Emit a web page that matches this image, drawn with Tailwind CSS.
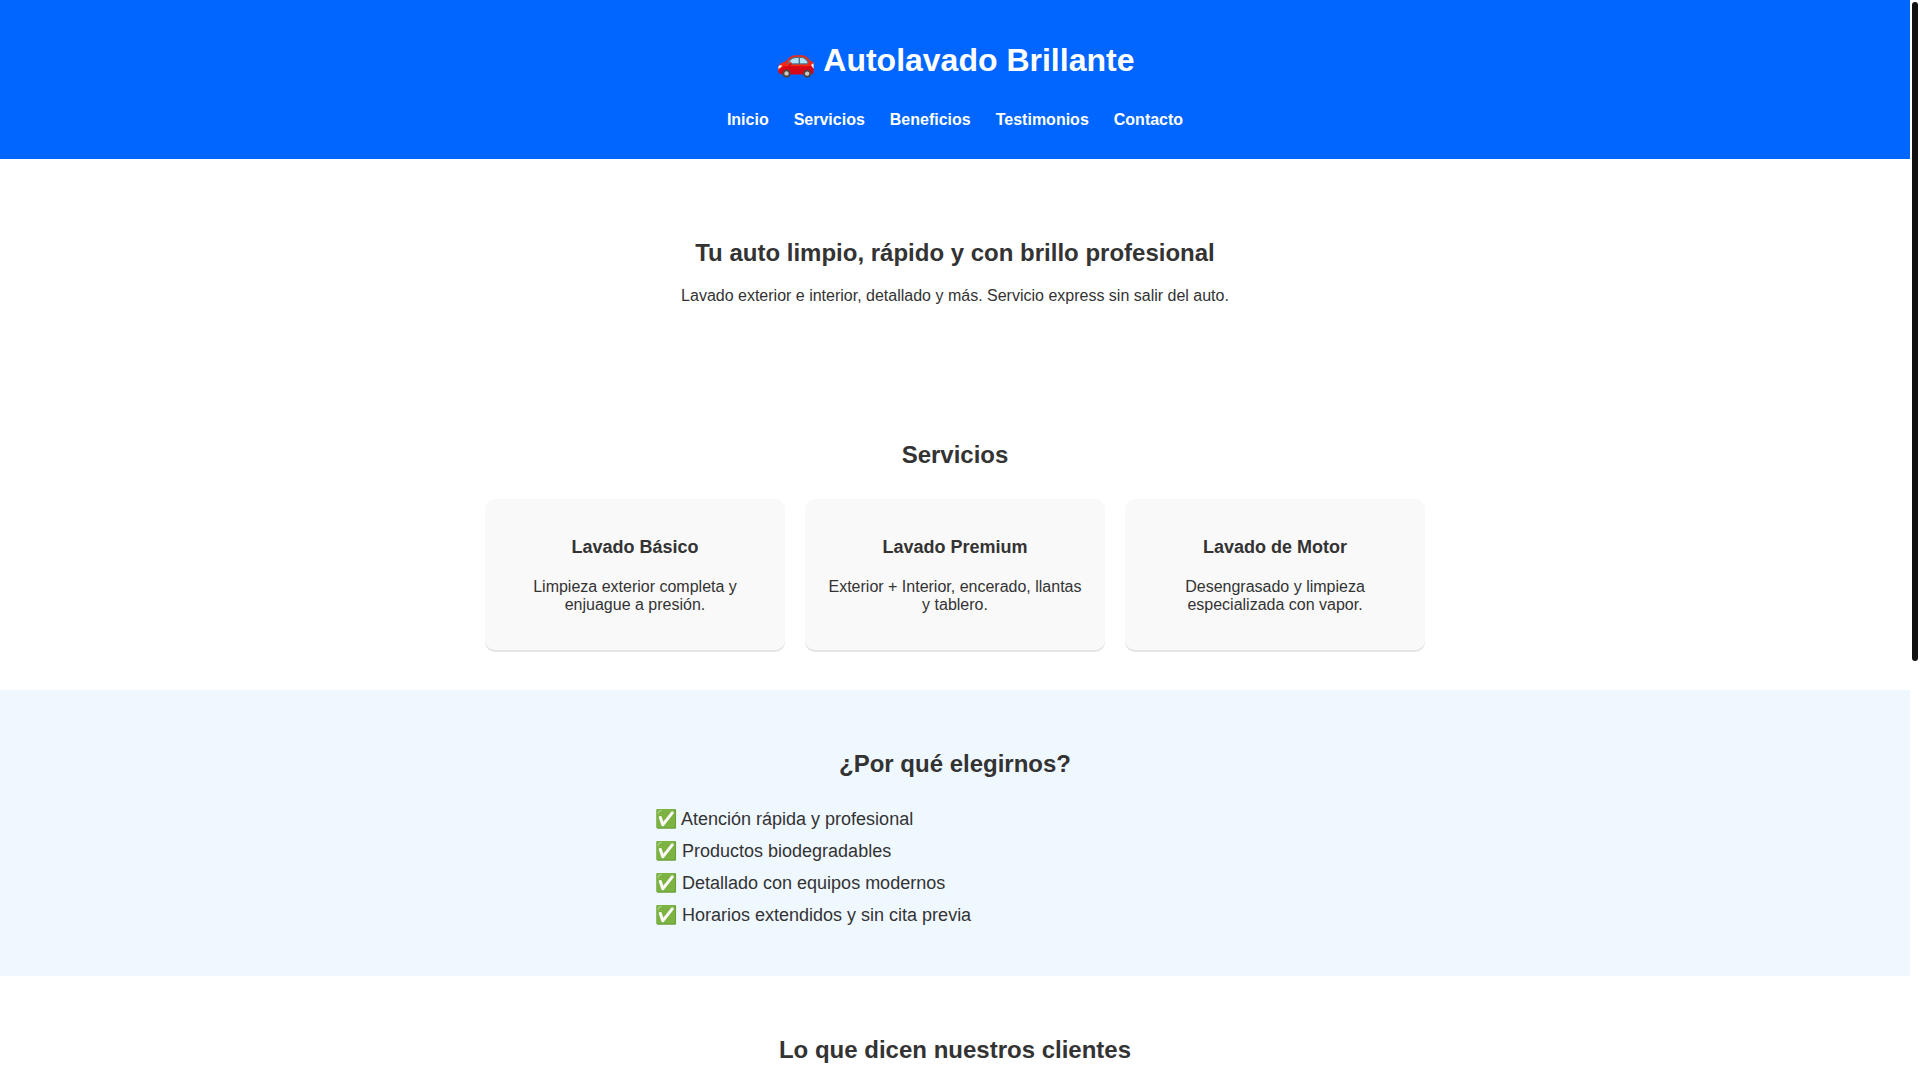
<!DOCTYPE html>
<html lang="es">
<head>
  <meta charset="UTF-8">
  <meta name="viewport" content="width=device-width, initial-scale=1.0">
  <title>Autolavado Brillante</title>
  <script src="https://cdn.jsdelivr.net/npm/@tailwindcss/browser@4"></script>
</head>
<body class="h-screen overflow-hidden bg-white pr-[10px] font-['Liberation_Sans',Arial,sans-serif] text-base leading-[18px] text-[#333]">

  <!-- Header -->
  <header class="bg-[#0066ff] px-5 pt-[42px] pb-[30px] text-center text-white">
    <h1 class="text-[32px] leading-[37px] font-bold">🚗 Autolavado Brillante</h1>
    <nav class="mt-8 flex flex-wrap justify-center gap-[25px] font-bold">
      <a href="#inicio">Inicio</a>
      <a href="#servicios">Servicios</a>
      <a href="#beneficios">Beneficios</a>
      <a href="#testimonios">Testimonios</a>
      <a href="#contacto">Contacto</a>
    </nav>
  </header>

  <!-- Hero -->
  <section id="inicio" class="px-5 pt-20 pb-[76px] text-center">
    <h2 class="mb-5 text-2xl leading-[28px] font-bold">Tu auto limpio, rápido y con brillo profesional</h2>
    <p>Lavado exterior e interior, detallado y más. Servicio express sin salir del auto.</p>
  </section>

  <!-- Servicios -->
  <section id="servicios" class="px-5 pt-[60px] pb-10 text-center">
    <h2 class="mb-[30px] text-2xl leading-[28px] font-bold">Servicios</h2>
    <div class="flex flex-wrap justify-center gap-5">
      <div class="w-[300px] rounded-[10px] bg-[#f9f9f9] px-5 pt-[38px] pb-9 shadow-[0_2px_0_rgba(0,0,0,0.1)]">
        <h3 class="mb-5 text-lg leading-[21px] font-bold">Lavado Básico</h3>
        <p>Limpieza exterior completa y enjuague a presión.</p>
      </div>
      <div class="w-[300px] rounded-[10px] bg-[#f9f9f9] px-5 pt-[38px] pb-9 shadow-[0_2px_0_rgba(0,0,0,0.1)]">
        <h3 class="mb-5 text-lg leading-[21px] font-bold">Lavado Premium</h3>
        <p>Exterior + Interior, encerado, llantas y tablero.</p>
      </div>
      <div class="w-[300px] rounded-[10px] bg-[#f9f9f9] px-5 pt-[38px] pb-9 shadow-[0_2px_0_rgba(0,0,0,0.1)]">
        <h3 class="mb-5 text-lg leading-[21px] font-bold">Lavado de Motor</h3>
        <p>Desengrasado y limpieza especializada con vapor.</p>
      </div>
    </div>
  </section>

  <!-- Beneficios -->
  <section id="beneficios" class="bg-[#f0f8ff] px-5 pt-[60px] pb-[45px]">
    <h2 class="mb-[25px] text-center text-2xl leading-[28px] font-bold">¿Por qué elegirnos?</h2>
    <ul class="mx-auto max-w-[600px] text-lg leading-[32px]">
      <li>✅ Atención rápida y profesional</li>
      <li>✅ Productos biodegradables</li>
      <li>✅ Detallado con equipos modernos</li>
      <li>✅ Horarios extendidos y sin cita previa</li>
    </ul>
  </section>

  <!-- Testimonios -->
  <section id="testimonios" class="px-5 pt-[60px] text-center">
    <h2 class="text-2xl leading-[28px] font-bold">Lo que dicen nuestros clientes</h2>
  </section>

  <!-- Scroll indicator -->
  <div class="fixed top-[2px] right-[2px] h-[61vh] w-[6px] rounded-full bg-[#111]"></div>

</body>
</html>
